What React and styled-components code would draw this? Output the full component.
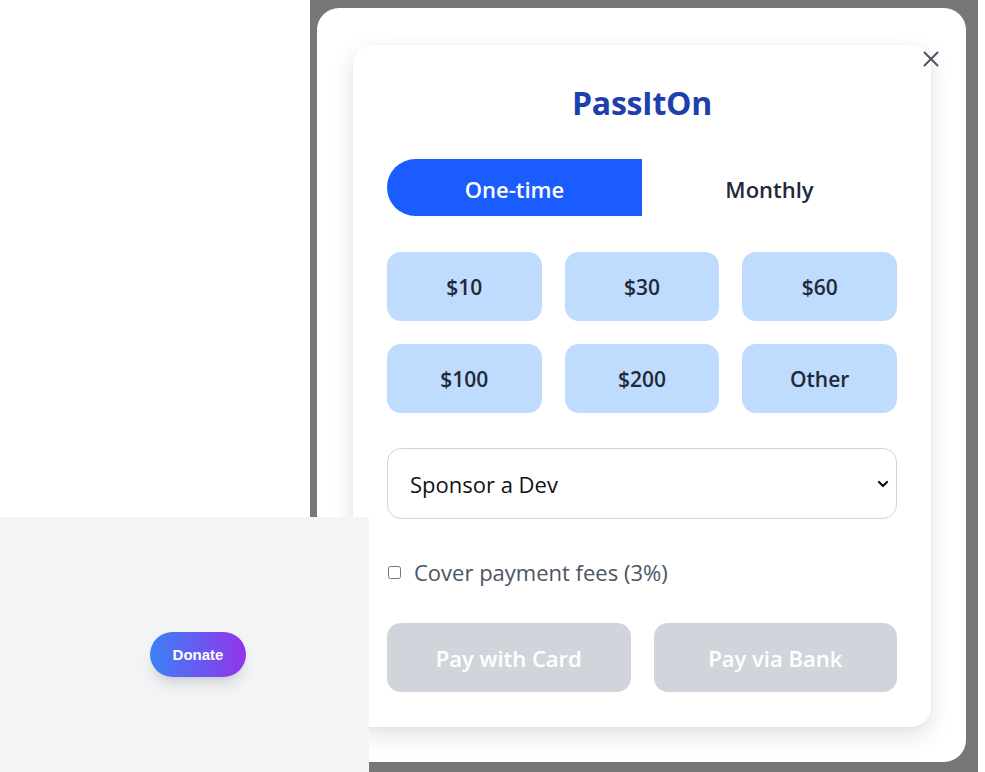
import React, { useState } from "react"
import styled, { createGlobalStyle } from "styled-components"

const GlobalStyle = createGlobalStyle`
  html, body {
    margin: 0;
    padding: 0;
    background: #ffffff;
    font-family: "Open Sans", "Noto Sans", sans-serif;
  }
  * {
    box-sizing: border-box;
  }
  button, select, input {
    font-family: inherit;
  }
`

const Page = styled.div`
  height: 772px;
  display: flex;
  flex-direction: column;
  justify-content: flex-end;
`

const WidgetPanel = styled.section`
  position: relative;
  z-index: 2;
  width: 369px;
  height: 255px;
  background: #f3f4f6;
  display: flex;
  align-items: center;
  justify-content: center;
  padding: 19px 0 0 27px;
`

const DonateButton = styled.button`
  width: 96px;
  height: 45px;
  border: none;
  border-radius: 999px;
  background: linear-gradient(90deg, #3b82f6, #9333ea);
  color: #ffffff;
  font-family: "Liberation Sans", Arial, sans-serif;
  font-weight: 700;
  font-size: 15px;
  box-shadow: 0 10px 15px -3px rgba(0, 0, 0, 0.12), 0 4px 6px -4px rgba(0, 0, 0, 0.1);
  cursor: pointer;
`

const Overlay = styled.div`
  position: fixed;
  top: 0;
  left: 310px;
  width: 668px;
  height: 772px;
  z-index: 1;
  background: #777777;
  padding: 8px 12px 10px 7px;
  display: flex;
`

const Modal = styled.div`
  position: relative;
  flex: 1;
  background: #ffffff;
  border-radius: 22px;
  padding: 37px 35px 0 36px;
`

const CloseButton = styled.button`
  position: absolute;
  top: 36px;
  right: 20px;
  width: 30px;
  height: 30px;
  border: none;
  background: transparent;
  display: flex;
  align-items: center;
  justify-content: center;
  padding: 0;
  cursor: pointer;
`

const Card = styled.div`
  background: #ffffff;
  border-radius: 20px;
  box-shadow: 0 8px 24px rgba(0, 0, 0, 0.12), 0 1px 4px rgba(0, 0, 0, 0.03);
  padding: 38px 34px 35px 34px;
  display: flex;
  flex-direction: column;
`

const Title = styled.h1`
  margin: 0;
  text-align: center;
  font-size: 32px;
  line-height: 40px;
  font-weight: 700;
  color: #1e40af;
  letter-spacing: -0.3px;
`

const Toggle = styled.div`
  margin-top: 36px;
  display: grid;
  grid-template-columns: 1fr 1fr;
  height: 57px;
`

const ToggleButton = styled.button`
  border: none;
  padding: 2px 0 0;
  font-size: 22px;
  font-weight: 600;
  cursor: pointer;
  background: ${p => (p.$active ? "#1b5cff" : "transparent")};
  color: ${p => (p.$active ? "#ffffff" : "#1f2937")};
  border-radius: ${p => (p.$active ? "999px 0 0 999px" : "0")};
`

const AmountGrid = styled.div`
  margin-top: 36px;
  display: grid;
  grid-template-columns: repeat(3, 1fr);
  column-gap: 23px;
  row-gap: 23px;
`

const AmountButton = styled.button`
  height: 69px;
  border: none;
  border-radius: 14px;
  background: #bfdbfe;
  color: #1f2937;
  font-size: 21px;
  font-weight: 600;
  cursor: pointer;
`

const SelectWrap = styled.div`
  position: relative;
  margin-top: 35px;
`

const Select = styled.select`
  width: 100%;
  height: 71px;
  appearance: none;
  border: 1px solid #d1d5db;
  border-radius: 14px;
  background: #ffffff;
  padding: 0 40px 0 22px;
  font-size: 22px;
  color: #111111;
`

const Chevron = styled.svg`
  position: absolute;
  right: 8px;
  top: 32px;
  pointer-events: none;
`

const FeeRow = styled.label`
  margin-top: 38px;
  height: 30px;
  display: flex;
  align-items: center;
  gap: 13px;
  font-size: 22px;
  color: #4b5563;
`

const Checkbox = styled.input`
  margin: 0 0 0 1px;
  width: 13px;
  height: 13px;
`

const PayRow = styled.div`
  margin-top: 36px;
  display: grid;
  grid-template-columns: 1fr 1fr;
  column-gap: 23px;
`

const PayButton = styled.button`
  height: 69px;
  border: none;
  border-radius: 14px;
  background: #d1d5db;
  color: #ffffff;
  font-size: 22px;
  font-weight: 600;
  cursor: not-allowed;
`

const amounts = ["$10", "$30", "$60", "$100", "$200", "Other"]

export default function App() {
  const [mode, setMode] = useState("one-time")

  return (
    <>
      <GlobalStyle />
      <Page>
        <WidgetPanel>
          <DonateButton>Donate</DonateButton>
        </WidgetPanel>
      </Page>
      <Overlay>
        <Modal>
          <CloseButton aria-label="Close">
            <svg width="16" height="16" viewBox="0 0 16 16">
              <path d="M1.5 1.5 L14.5 14.5 M14.5 1.5 L1.5 14.5" stroke="#4b5563" strokeWidth="2" strokeLinecap="round" />
            </svg>
          </CloseButton>
          <Card>
            <Title>PassItOn</Title>
            <Toggle>
              <ToggleButton $active={mode === "one-time"} onClick={() => setMode("one-time")}>
                One-time
              </ToggleButton>
              <ToggleButton $active={mode === "monthly"} onClick={() => setMode("monthly")}>
                Monthly
              </ToggleButton>
            </Toggle>
            <AmountGrid>
              {amounts.map(a => (
                <AmountButton key={a}>{a}</AmountButton>
              ))}
            </AmountGrid>
            <SelectWrap>
              <Select defaultValue="dev">
                <option value="dev">Sponsor a Dev</option>
                <option value="general">General Fund</option>
              </Select>
              <Chevron width="12" height="8" viewBox="0 0 12 8">
                <path d="M2 2 L6 6 L10 2" fill="none" stroke="#111111" strokeWidth="2.2" strokeLinecap="round" strokeLinejoin="round" />
              </Chevron>
            </SelectWrap>
            <FeeRow>
              <Checkbox type="checkbox" />
              Cover payment fees (3%)
            </FeeRow>
            <PayRow>
              <PayButton disabled>Pay with Card</PayButton>
              <PayButton disabled>Pay via Bank</PayButton>
            </PayRow>
          </Card>
        </Modal>
      </Overlay>
    </>
  )
}
